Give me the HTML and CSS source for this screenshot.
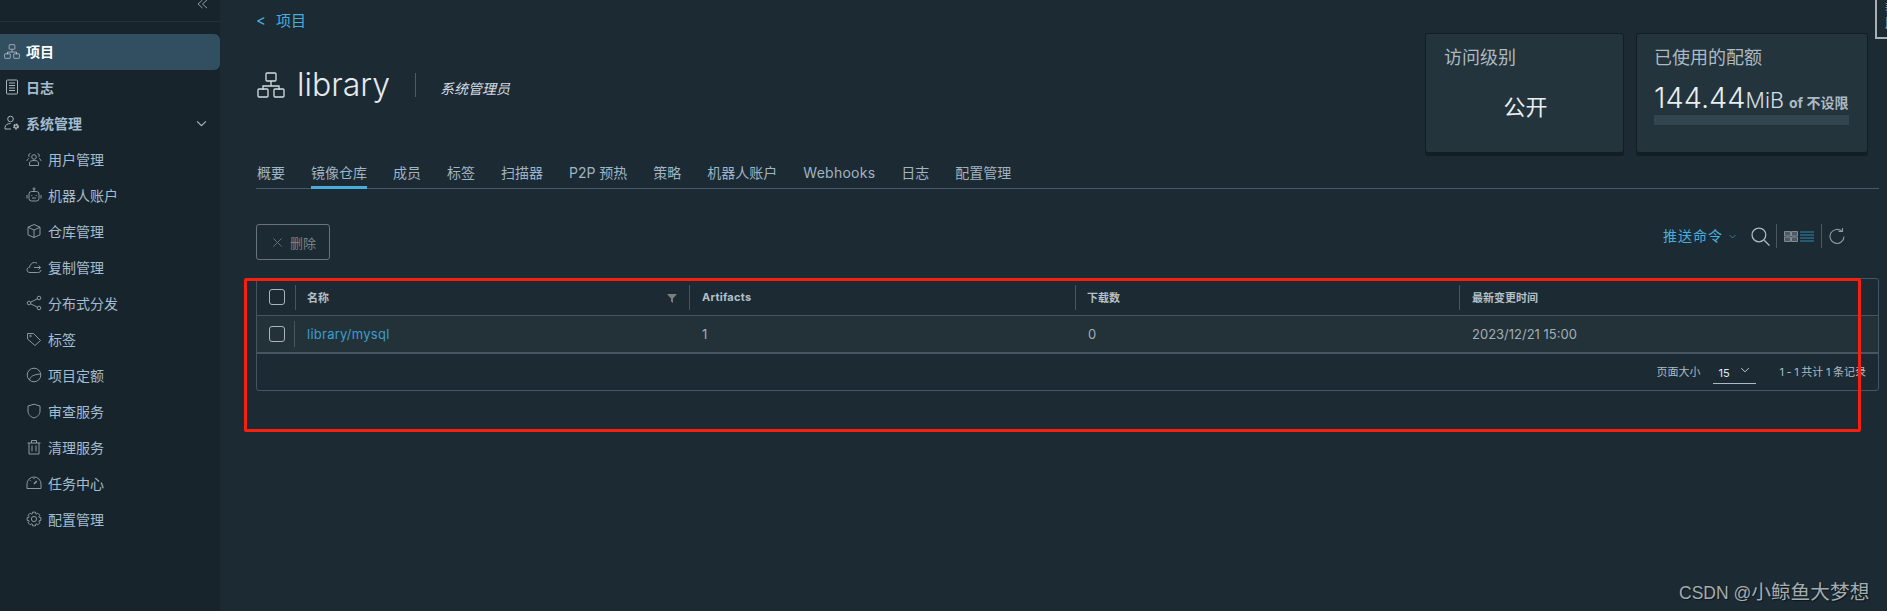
FILE: index.html
```html
<!DOCTYPE html>
<html lang="zh-CN">
<head>
    <meta charset="UTF-8">
    <meta name="viewport" content="width=device-width, initial-scale=1.0">
    <title>library - 镜像仓库</title>
    <link rel="stylesheet" href="styles.css">
</head>
<body>

    <svg class="defs" width="0" height="0">
        <symbol id="i-tree" viewBox="0 0 28 26"><rect x="9" y="1" width="10" height="8" rx="1"/><path d="M14 9v5M6 18v-4h16v4"/><rect x="1" y="17" width="10" height="8" rx="1"/><rect x="17" y="17" width="10" height="8" rx="1"/></symbol>
        <symbol id="i-log" viewBox="0 0 16 16"><rect x="2.500" y="1" width="11" height="14" rx="1"/><path d="M5 4h6M5 6.500h6M5 9h6M5 11.500h6"/></symbol>
        <symbol id="i-admin" viewBox="0 0 16 16"><circle cx="6.500" cy="4" r="2.800"/><path d="M1 14v-1.500c0-2.500 2.500-4 5.500-4"/><path d="M1 14h6"/><circle cx="12" cy="11.500" r="2" fill="#a9b5bc" stroke-width="1.800" stroke-dasharray="1.500 .6"/><circle cx="12" cy="11.500" r=".9" fill="#18242c" stroke="none"/></symbol>
        <symbol id="i-users" viewBox="0 0 16 16"><circle cx="8" cy="6" r="2.300"/><path d="M3.500 14.500v-2.500c0-1.500 1.500-2.500 4.500-2.500s4.500 1 4.500 2.500v2.500z"/><path d="M4.500 2.500a2 2 0 0 0-1 3.600M1 10c0-1.300.8-2.200 2-2.500M11.500 2.500a2 2 0 0 1 1 3.600M15 10c0-1.300-.8-2.200-2-2.500"/></symbol>
        <symbol id="i-robot" viewBox="0 0 16 16"><rect x="3" y="4.500" width="10" height="9.500" rx="2.500"/><circle cx="8" cy="1.800" r="1"/><path d="M8 2.800v1.700M1 8v3.500M15 8v3.500M6 11h4M5.800 8v1M10.200 8v1"/></symbol>
        <symbol id="i-box" viewBox="0 0 16 16"><path d="M8 1.500l6 2.700v7.600l-6 2.700-6-2.700V4.200zM2 4.200l6 2.800 6-2.800M8 7v7.500"/></symbol>
        <symbol id="i-cloud" viewBox="0 0 16 16"><path d="M4 13.500h7.500c2 0 3.500-.8 3.500-2.500M4 13.500c-1.800 0-3-1-3-2.600 0-1.500 1-2.400 2.500-2.500C4 5.500 6 3.500 8.500 3.500c1 0 1.800.3 2.500.8"/><path d="M8 8.500h6.500M12.500 6.500l2 2-2 2"/></symbol>
        <symbol id="i-share" viewBox="0 0 16 16"><circle cx="3" cy="8" r="1.800"/><circle cx="13" cy="3" r="1.800"/><circle cx="13" cy="13" r="1.800"/><path d="M4.600 7.200l6.800-3.400M4.600 8.800l6.800 3.400"/></symbol>
        <symbol id="i-tag" viewBox="0 0 16 16"><path d="M1.500 2.500h6l7 7-5.500 5-7.500-6.500z"/><circle cx="4.500" cy="5" r=".8"/></symbol>
        <symbol id="i-quota" viewBox="0 0 16 16"><circle cx="8" cy="8" r="6.800"/><path d="M3.500 13C4.500 9.500 7 7.500 14.800 7"/></symbol>
        <symbol id="i-shield" viewBox="0 0 16 16"><path d="M8 1.200l6 1.800v5c0 3.500-2.500 5.800-6 7-3.500-1.200-6-3.500-6-7V3z"/></symbol>
        <symbol id="i-trash" viewBox="0 0 16 16"><path d="M1.500 4h13M3 4v11h10V4M5.500 4V1.500h5V4M6 6.500v6M10 6.500v6"/></symbol>
        <symbol id="i-gauge" viewBox="0 0 16 16"><path d="M1 13.500V9a7 7 0 0 1 14 0v4.500z"/><path d="M8 9l2.800-3" stroke-width="1.600"/><path d="M4 5.200l1 1M8 3v1"/></symbol>
        <symbol id="i-gear" viewBox="0 0 16 16"><circle cx="8" cy="8" r="2.600"/><polygon points="12.98,6.19 14.85,6.54 14.85,9.46 12.98,9.81 12.80,10.24 13.87,11.81 11.81,13.87 10.24,12.80 9.81,12.98 9.46,14.85 6.54,14.85 6.19,12.98 5.76,12.80 4.19,13.87 2.13,11.81 3.20,10.24 3.02,9.81 1.15,9.46 1.15,6.54 3.02,6.19 3.20,5.76 2.13,4.19 4.19,2.13 5.76,3.20 6.19,3.02 6.54,1.15 9.46,1.15 9.81,3.02 10.24,3.20 11.81,2.13 13.87,4.19 12.80,5.76"/></symbol>
        <symbol id="i-chev" viewBox="0 0 12 8"><path d="M1 1.500l5 5 5-5"/></symbol>
    </svg>

    <aside class="sidebar">
        <div class="collapse">
            <svg class="icon-collapse" viewBox="0 0 12 10"><path d="M6 0L1 4.500 6 9M11 0L6 4.500 11 9"/></svg>
        </div>
        <nav class="nav">
            <a class="nav-item top active"><svg class="ico"><use href="#i-tree"/></svg>项目</a>
            <a class="nav-item top"><svg class="ico"><use href="#i-log"/></svg>日志</a>
            <a class="nav-item top"><svg class="ico"><use href="#i-admin"/></svg>系统管理<svg class="nav-chev"><use href="#i-chev"/></svg></a>
            <a class="nav-item"><svg class="ico"><use href="#i-users"/></svg>用户管理</a>
            <a class="nav-item"><svg class="ico"><use href="#i-robot"/></svg>机器人账户</a>
            <a class="nav-item"><svg class="ico"><use href="#i-box"/></svg>仓库管理</a>
            <a class="nav-item"><svg class="ico"><use href="#i-cloud"/></svg>复制管理</a>
            <a class="nav-item"><svg class="ico"><use href="#i-share"/></svg>分布式分发</a>
            <a class="nav-item"><svg class="ico"><use href="#i-tag"/></svg>标签</a>
            <a class="nav-item"><svg class="ico"><use href="#i-quota"/></svg>项目定额</a>
            <a class="nav-item"><svg class="ico"><use href="#i-shield"/></svg>审查服务</a>
            <a class="nav-item"><svg class="ico"><use href="#i-trash"/></svg>清理服务</a>
            <a class="nav-item"><svg class="ico"><use href="#i-gauge"/></svg>任务中心</a>
            <a class="nav-item"><svg class="ico"><use href="#i-gear"/></svg>配置管理</a>
        </nav>
    </aside>

    <main class="content">
        <div class="top-row">
            <div>
                <div class="crumb"><span class="crumb-arrow">&lt;</span>项目</div>
                <div class="title-row">
                    <svg class="title-icon"><use href="#i-tree"/></svg>
                    <h1 class="title">library</h1>
                    <span class="role">系统管理员</span>
                </div>
            </div>
            <div class="cards">
                <div class="card card-access">
                    <div class="card-title">访问级别</div>
                    <div class="card-public">公开</div>
                </div>
                <div class="card card-quota">
                    <div class="card-title">已使用的配额</div>
                    <div class="quota-line"><span class="quota-num">144.44</span><span class="quota-unit">MiB</span><span class="quota-of">of 不设限</span></div>
                    <div class="quota-bar"></div>
                </div>
            </div>
        </div>

        <div class="tabs">
            <a class="tab">概要</a>
            <a class="tab active">镜像仓库</a>
            <a class="tab">成员</a>
            <a class="tab">标签</a>
            <a class="tab">扫描器</a>
            <a class="tab">P2P 预热</a>
            <a class="tab">策略</a>
            <a class="tab">机器人账户</a>
            <a class="tab latin">Webhooks</a>
            <a class="tab">日志</a>
            <a class="tab">配置管理</a>
        </div>

        <div class="toolbar">
            <button class="del-btn"><svg class="del-x" viewBox="0 0 12 12"><path d="M1.500 1.500l9 9M10.500 1.500l-9 9"/></svg>删除</button>
            <div class="tools">
                <span class="push">推送命令</span>
                <svg class="push-chev"><use href="#i-chev"/></svg>
                <svg class="tool-search" viewBox="0 0 18 18"><circle cx="7.500" cy="7.500" r="6.500"/><path d="M12.500 12.500l5 5"/></svg>
                <span class="tool-sep"></span>
                <svg class="tool-grid" viewBox="0 0 14 11"><path d="M.5.500h6v4.500h-6zM7.500.500h6v4.500h-6zM.5 6h6v4.500h-6zM7.500 6h6v4.500h-6z"/></svg>
                <svg class="tool-list" viewBox="0 0 14 11"><path d="M0 1h14M0 4h14M0 7h14M0 10h14"/></svg>
                <span class="tool-sep second"></span>
                <svg class="tool-refresh" viewBox="0 0 16 16"><path d="M13 3.500A7 7 0 1 0 15 8.500"/><path d="M9.500 3.500H13.500V0"/></svg>
            </div>
        </div>

        <div class="table">
            <div class="row head">
                <div class="cell-check"><span class="check"></span></div>
                <div class="th th-name">名称<svg class="filter" viewBox="0 0 10 9"><path d="M0 0h10L6 4.500V9L4 7.500V4.500z"/></svg></div>
                <div class="th latin">Artifacts</div>
                <div class="th th-dl">下载数</div>
                <div class="th">最新变更时间</div>
            </div>
            <div class="row body-row">
                <div class="cell-check"><span class="check"></span></div>
                <div class="td td-name"><a class="link">library/mysql</a></div>
                <div class="td">1</div>
                <div class="td">0</div>
                <div class="td">2023/12/21 15:00</div>
            </div>
            <div class="table-foot">
                <span>页面大小</span>
                <span class="page-select">15<svg class="select-chev"><use href="#i-chev"/></svg></span>
                <span class="page-count">1 - 1 共计 1 条记录</span>
            </div>
        </div>
    </main>

    <!-- annotation and overlays on top of the screenshot -->
    <div class="red-box"></div>
    <div class="side-tab"><span>帮助</span></div>
    <div class="watermark"><span class="wm-latin">CSDN @</span>小鲸鱼大梦想</div>

</body>
</html>
```
FILE: styles.css
```css
* {
    box-sizing: border-box;
}

html, body {
    margin: 0;
    height: 611px;
    overflow: hidden;
}

body {
    display: flex;
    background-color: #1c2a33;
    color: #acbac3;
    font-family: Inter, "Noto Sans CJK SC", sans-serif;
    font-size: 14px;
}

.defs {
    position: absolute;
}

symbol {
    overflow: visible;
}

.latin {
    letter-spacing: .25px;
}

/* sidebar */
.sidebar {
    width: 220px;
    flex: none;
    background-color: #18242c;
}

.collapse {
    height: 22px;
    border-bottom: 1px solid #22313a;
    padding-left: 197px;
}

.icon-collapse {
    display: block;
    width: 11px;
    height: 9px;
    fill: none;
    stroke: #9aa8b1;
}

.nav {
    padding-top: 12px;
}

.nav-item {
    display: flex;
    align-items: center;
    height: 36px;
    padding-left: 26px;
    padding-bottom: 2px;
    color: #a3bcd0;
}

.nav-item.top {
    padding-left: 4px;
    font-weight: 700;
}

.nav-item.active {
    background-color: #324f61;
    border-radius: 0 6px 6px 0;
    color: #fff;
}

.ico {
    width: 16px;
    height: 16px;
    margin-right: 6px;
    fill: none;
    stroke: #8a98a1;
    stroke-width: 1;
    flex: none;
}

.nav-item.top .ico {
    stroke: #a9b5bc;
    margin-right: 6px;
}

.nav-item.active .ico {
    stroke: #e4eaee;
    width: 16px;
    height: 15px;
}

.nav-chev {
    width: 11px;
    height: 7px;
    margin-left: auto;
    margin-right: 13px;
    fill: none;
    stroke: #acbac3;
    stroke-width: 1.2;
}

/* main column */
.content {
    flex: 1;
    min-width: 0;
    padding: 0 8px 0 36px;
}

.top-row {
    display: flex;
    justify-content: space-between;
    height: 158px;
}

.crumb {
    height: 42px;
    line-height: 42px;
    font-size: 15px;
    color: #49aedb;
}

.crumb-arrow {
    margin-right: 10px;
}

.title-row {
    display: flex;
    align-items: center;
    height: 40px;
    margin-top: 23px;
}

.title-icon {
    width: 28px;
    height: 26px;
    margin-left: 1px;
    fill: none;
    stroke: #d6dde1;
    stroke-width: 1.300;
}

.title {
    margin: 0 0 0 12px;
    font-size: 32px;
    font-weight: 300;
    color: #e4eaee;
    line-height: 40px;
}

.role {
    margin-left: 25px;
    padding-left: 24px;
    border-left: 1px solid #4b5a63;
    height: 24px;
    line-height: 32px;
    font-size: 14px;
    font-style: italic;
    font-weight: 400;
    color: #d5dde2;
}

.cards {
    display: flex;
    gap: 12px;
    padding-top: 33px;
    padding-right: 11px;
}

.card {
    height: 120px;
    background-color: #23343c;
    border: 1px solid #131d24;
    border-radius: 3px;
    box-shadow: 0 3px 0 #131d24;
    padding: 0 17px;
}

.card-access {
    width: 199px;
}

.card-quota {
    width: 232px;
}

.card-title {
    margin-top: 12px;
    line-height: 24px;
    font-size: 18px;
    color: #acbac3;
}

.card-access .card-title {
    padding-left: 1px;
}

.card-public {
    margin-top: 20px;
    padding-left: 2px;
    text-align: center;
    font-size: 22px;
    line-height: 34px;
    color: #e9eef1;
}

.quota-line {
    display: flex;
    align-items: baseline;
    margin-top: 10px;
    height: 36px;
    line-height: 36px;
    white-space: nowrap;
}

.quota-num {
    font-size: 29px;
    font-weight: 300;
    color: #e9eef1;
}

.quota-unit {
    font-size: 21.500px;
    font-weight: 300;
    color: #d5dde2;
}

.quota-of {
    margin-left: 5px;
    font-size: 14px;
    font-weight: 700;
    color: #acbac3;
}

.quota-bar {
    height: 10px;
    margin-top: -1px;
    width: 195px;
    background-color: #33454f;
}

/* tabs */
.tabs {
    display: flex;
    gap: 26px;
    height: 31px;
    padding-left: 1px;
    border-bottom: 1px solid #4a5964;
}

.tab {
    height: 31px;
    line-height: 30px;
    color: #9fb4c4;
    white-space: nowrap;
}

.tab.active {
    border-bottom: 3px solid #49aedb;
}

/* toolbar */
.toolbar {
    display: flex;
    justify-content: space-between;
    align-items: flex-start;
    height: 36px;
    margin-top: 35px;
}

.del-btn {
    display: flex;
    align-items: center;
    width: 74px;
    height: 36px;
    padding: 0 0 0 15px;
    background: none;
    border: 1px solid #67747c;
    border-radius: 3px;
    color: #76838b;
    font-family: inherit;
    font-size: 13px;
}

.del-x {
    width: 11px;
    height: 11px;
    margin-right: 7px;
    fill: none;
    stroke: #67747c;
}

.tools {
    display: flex;
    align-items: center;
    height: 24px;
    margin-top: 0;
    padding-right: 34px;
}

.push {
    color: #49aedb;
    letter-spacing: 1px;
    margin-top: -2px;
}

.push-chev {
    width: 7px;
    height: 5px;
    margin-left: 6px;
    fill: none;
    stroke: #3a8cb2;
    stroke-width: 1.500;
}

.tool-search {
    width: 19px;
    height: 19px;
    margin-left: 15px;
    fill: none;
    stroke: #acbac3;
    stroke-width: 1.200;
}

.tool-sep {
    width: 1px;
    height: 24px;
    margin: 0 7px 0 6px;
    background-color: #4a5964;
}

.tool-sep.second {
    margin-left: 7px;
}

.tool-grid {
    width: 14px;
    height: 11px;
    margin-right: 2px;
    fill: #4b5a63;
    stroke: #7d8a92;
    stroke-width: 1;
}

.tool-list {
    width: 14px;
    height: 11px;
    fill: none;
    stroke: #2f8cb0;
    stroke-width: 1;
}

.tool-refresh {
    width: 16px;
    height: 16px;
    fill: none;
    stroke: #8d9aa2;
    stroke-width: 1.100;
    overflow: visible;
}

/* table */
.table {
    margin-top: 18px;
    height: 113px;
    border: 1px solid #465560;
    border-radius: 3px;
}

.row {
    display: grid;
    grid-template-columns: 38px 394px 386px 384px 1fr;
    align-items: center;
}

.row.head {
    height: 37px;
    border-bottom: 1px solid #465560;
}

.row.body-row {
    height: 38px;
    background-color: #233239;
    border-bottom: 2px solid #465560;
}

.cell-check {
    padding-left: 12px;
    line-height: 0;
}

.check {
    display: inline-block;
    width: 16px;
    height: 16px;
    border: 1px solid #a9b5bc;
    border-radius: 3px;
}

.th {
    display: flex;
    align-items: center;
    justify-content: space-between;
    height: 25px;
    padding-left: 12px;
    border-left: 1px solid #465560;
    font-size: 11px;
    font-weight: 700;
    color: #b3c0c8;
}

.th-name, .th-dl {
    padding-left: 11px;
}

.filter {
    width: 10px;
    height: 9px;
    margin-right: 12px;
    margin-top: 2px;
    fill: #7b7f80;
}

.td {
    padding-left: 13px;
    font-size: 13px;
    color: #a0aeb7;
}

.td-name {
    height: 26px;
    padding-left: 12px;
    line-height: 26px;
    border-left: 1px solid #465560;
    margin-left: -1px;
}

.link {
    color: #3a9fd0;
    letter-spacing: .25px;
}

.table-foot {
    display: flex;
    justify-content: flex-end;
    align-items: center;
    gap: 12px;
    height: 36px;
    padding-right: 12px;
    padding-bottom: 2px;
    font-size: 11px;
    color: #acbac3;
}

.page-select {
    display: flex;
    align-items: center;
    justify-content: space-between;
    width: 43px;
    height: 24px;
    margin: 2px 12px 0 0;
    padding: 3px 6px 0;
    border-bottom: 1px solid #acbac3;
    color: #e4eaee;
}

.page-count {
    word-spacing: -.5px;
}

.select-chev {
    width: 10px;
    height: 6px;
    margin-top: -6px;
    fill: none;
    stroke: #c4cfd6;
    stroke-width: 1.300;
}

/* overlays */
.red-box {
    position: absolute;
    left: 244px;
    top: 278px;
    width: 1617px;
    height: 154px;
    border: 3px solid #f5200f;
    border-radius: 2px;
}

.side-tab {
    position: absolute;
    left: 1875px;
    top: -4px;
    width: 14px;
    height: 43px;
    border: 2px solid #a8b0b4;
    border-right: none;
    background-color: #1c2a33;
    overflow: hidden;
}

.side-tab span {
    position: absolute;
    left: 4px;
    top: 4px;
    writing-mode: vertical-rl;
    font-size: 14px;
    color: #acbac3;
}

.watermark {
    position: absolute;
    left: 1679px;
    top: 580px;
    font-family: "Liberation Sans", "Noto Sans CJK SC", sans-serif;
    font-size: 19.700px;
    line-height: 24px;
    color: #a3acb0;
    text-shadow: 1px 1px 1px #0e151a;
    white-space: nowrap;
}

.wm-latin {
    font-size: 17.500px;
}
```
